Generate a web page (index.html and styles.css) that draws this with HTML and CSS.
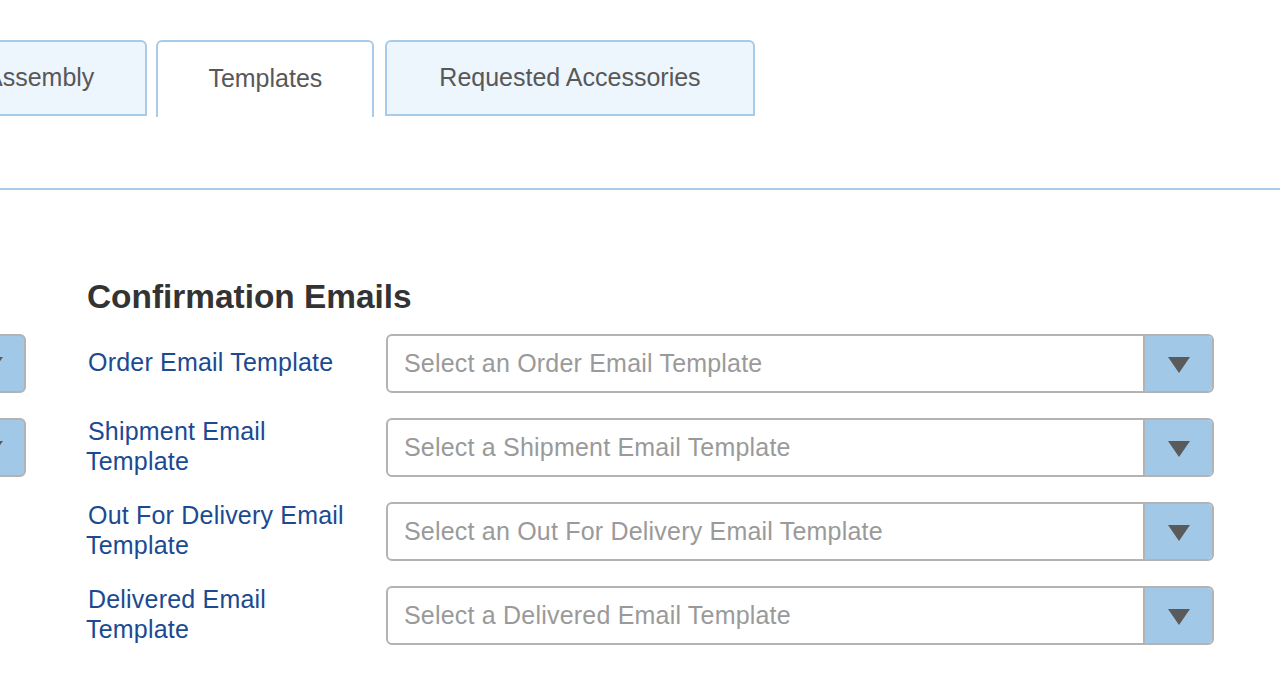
FILE: index.html
```html
<!DOCTYPE html>
<html>
<head>
<meta charset="utf-8">
<link rel="stylesheet" href="styles.css">
</head>
<body>
<nav class="tabs">
  <div class="tab tab-first">Assembly</div>
  <div class="tab tab-active">Templates</div>
  <div class="tab tab-wide">Requested Accessories</div>
</nav>
<hr class="divider">
<main class="content">
  <div class="left-col">
    <div class="stub"><span class="arrow"></span></div>
    <div class="stub"><span class="arrow"></span></div>
  </div>
  <section class="emails">
    <h2 class="heading">Confirmation Emails</h2>
    <div class="row">
      <label class="label">Order Email Template</label>
      <div class="select"><span class="placeholder">Select an Order Email Template</span><span class="btn"><span class="arrow"></span></span></div>
    </div>
    <div class="row">
      <label class="label">Shipment Email Template</label>
      <div class="select"><span class="placeholder">Select a Shipment Email Template</span><span class="btn"><span class="arrow"></span></span></div>
    </div>
    <div class="row">
      <label class="label">Out For Delivery Email Template</label>
      <div class="select"><span class="placeholder">Select an Out For Delivery Email Template</span><span class="btn"><span class="arrow"></span></span></div>
    </div>
    <div class="row">
      <label class="label">Delivered Email Template</label>
      <div class="select"><span class="placeholder">Select a Delivered Email Template</span><span class="btn"><span class="arrow"></span></span></div>
    </div>
  </section>
</main>
</body>
</html>
```
FILE: styles.css
```css
html, body {
  margin: 0;
  padding: 0;
  background: #fff;
  overflow: hidden;
}
body {
  font-family: "Liberation Sans", Arial, Helvetica, sans-serif;
  width: 1280px;
  height: 700px;
}
.tabs {
  display: flex;
  align-items: flex-start;
  padding-top: 40px;
  margin-left: -67px;
  gap: 11px;
}
.tab {
  box-sizing: border-box;
  height: 76px;
  padding: 0 51px 1px 51px;
  border: 2px solid #a7cbe8;
  border-radius: 6px 6px 0 0;
  background: #edf5fd;
  color: #585858;
  font-size: 25px;
  display: flex;
  align-items: center;
  white-space: nowrap;
}
.tab-active {
  background: #fff;
  border-bottom: none;
  height: 77px;
  margin-left: -2px;
  padding: 0 50px 3px 50px;
}
.tab-wide {
  padding: 0 52px 1px 52px;
}
.divider {
  margin: 71px 0 0 0;
  border: none;
  height: 2px;
  background: #a7cbe8;
}
.content {
  display: flex;
  gap: 61px;
}
.left-col {
  width: 26px;
  flex: none;
  padding-top: 144px;
  display: flex;
  flex-direction: column;
  gap: 25px;
}
.stub {
  box-sizing: border-box;
  width: 68px;
  height: 59px;
  margin-left: -42px;
  background: #a2c8e8;
  border: 2px solid #b3b3b3;
  border-radius: 6px;
  display: flex;
  align-items: center;
  justify-content: center;
}
.emails {
  flex: none;
  width: 1140px;
}
.heading {
  margin: 88px 0 0 0;
  font-size: 33.4px;
  font-weight: bold;
  color: #333;
  line-height: 38px;
  height: 56px;
}
.row {
  display: flex;
  align-items: center;
  height: 59px;
  margin-bottom: 25px;
}
.label {
  box-sizing: border-box;
  width: 300px;
  flex: none;
  margin-left: -1px;
  padding-right: 30px;
  padding-bottom: 3px;
  font-size: 25px;
  line-height: 30px;
  color: #1b4a92;
  letter-spacing: 0.2px;
  text-indent: 2px;
}
.select {
  box-sizing: border-box;
  width: 828px;
  height: 59px;
  border: 2px solid #b3b3b3;
  border-radius: 6px;
  display: flex;
  align-items: stretch;
  overflow: hidden;
}
.placeholder {
  flex: 1;
  display: flex;
  align-items: center;
  padding-left: 16px;
  font-size: 25px;
  color: #9a9a9a;
  letter-spacing: 0.2px;
}
.btn {
  width: 67px;
  flex: none;
  background: #a2c8e8;
  border-left: 2px solid #b3b3b3;
  display: flex;
  align-items: center;
  justify-content: center;
}
.arrow {
  width: 0;
  height: 0;
  border-left: 11px solid transparent;
  border-right: 11px solid transparent;
  border-top: 16px solid #5a5a5a;
  margin-top: 2px;
}
```
